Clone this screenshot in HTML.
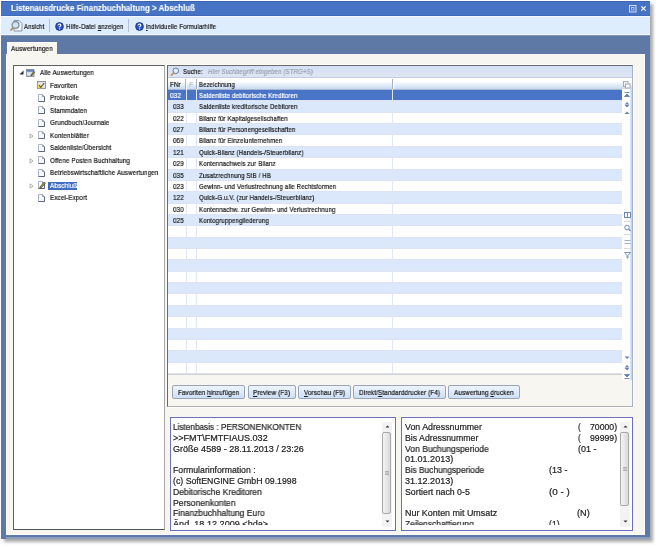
<!DOCTYPE html>
<html><head><meta charset="utf-8">
<style>
*{margin:0;padding:0;box-sizing:border-box}
html,body{width:659px;height:548px;overflow:hidden;background:#fff}
body{position:relative;font-family:"Liberation Sans",sans-serif;color:#1a1a1a}
.a{position:absolute}
svg{position:absolute;overflow:visible}
.t{position:absolute;line-height:1;white-space:pre;transform-origin:0 0;will-change:transform;-webkit-text-stroke:0.22px currentColor}
#shadow{left:1px;top:1px;width:649px;height:538px;background:transparent;box-shadow:3px 3px 3px 0px rgba(0,0,0,0.34)}
#win{left:1px;top:1px;width:649px;height:538px;background:#5f79a6}
#title{left:1px;top:1px;width:649px;height:15px;background:#4673c4;border-top:1px solid #3d64b2;border-bottom:1px solid #4068b8}
#toolbar{left:1px;top:16px;width:649px;height:19px;background:#deedfd;border-top:1px solid #f4f9ff;border-bottom:1px solid #f0f6fe}
#tbline{left:1px;top:35px;width:649px;height:1px;background:#7f93b8}
#panel{left:6px;top:54px;width:639px;height:481px;background:#f7f6f1;border-left:1px solid #fdfdfb;border-right:1px solid #fdfdfb;border-bottom:1px solid #fdfdfb}
#tab{left:7px;top:42px;width:50px;height:12px;background:#f7f6f1;border-top:1px solid #fbfbf8;border-left:1px solid #fdfdfb}
.box{background:#fff;border:1px solid #5a5a5a}
#tree{left:13px;top:65px;width:152px;height:465px;border-color:#606060 #a8a8a8 #505050 #606060}
#grid{left:167px;top:65px;width:466px;height:342px;background:#f7f6f1;border-color:#6a6a6a #a4b0c4 #b0b0b0 #6a6a6a;box-shadow:1px 1px 0 #fff,0 -1px 0 #fff}
#search{left:168px;top:66px;width:464px;height:11.5px;background:linear-gradient(#d3e1f6,#e0e4f3);border-bottom:1px solid #c3cfe0}
#hdr{left:168px;top:77.5px;width:464px;height:12.5px;background:linear-gradient(#fff 30%,#c7daf2);border-bottom:1px solid #a9b7cc}
.row{position:absolute;left:168px;width:453.5px;height:11.36px;border-bottom:1px solid #dde3f2}
.odd{background:#dbe8fb}
.even{background:#fff}
.sel{background:#4a74c8}
.vline{position:absolute;width:1px;background:#dfe7f6}
#nav{left:622px;top:89px;width:10px;height:290.5px;background:#fff;border-right:1px solid #c8d6ee;box-shadow:inset -1px 0 0 #d8e6fa}
.btn{position:absolute;top:385px;height:14px;border:1px solid #98a5b8;border-radius:2px;background:linear-gradient(#eef4fd,#cfdff5)}
.info{background:#fff;border:1px solid #6e6ec0}
.sbar{position:absolute;width:10px;background:#f3f3f3}
.thumb{position:absolute;left:0.5px;width:9px;border:1px solid #a9a9a9;border-radius:2px;background:linear-gradient(90deg,#f4f4f4,#d9d9d9)}
.tsel{background:#3e6cc0}
u{text-decoration:underline;text-underline-offset:0.8px;text-decoration-thickness:0.7px}
</style></head><body>
<div id="shadow" class="a"></div>
<div id="win" class="a"></div>
<div class="a" style="left:6px;top:537px;width:644px;height:2px;background:#8a9cc0"></div>
<div id="title" class="a"></div>
<div class="t " style="left:11.00px;top:4.00px;font-size:8.5px;transform:scaleX(0.9391);font-weight:bold;color:#fff;-webkit-text-stroke:0.1px #fff">Listenausdrucke Finanzbuchhaltung &gt; Abschluß</div>
<svg style="left:628px;top:4px" width="9" height="9" viewBox="0 0 9 9"><rect x="1.5" y="1.5" width="6.5" height="6.5" fill="none" stroke="#d0dcf4" stroke-width="1"/><rect x="3.5" y="3.5" width="2.5" height="2.5" fill="none" stroke="#c4d2f0" stroke-width="0.8"/></svg>
<svg style="left:640px;top:5px" width="7" height="7" viewBox="0 0 7 7"><path d="M1.3 1.3L5.7 5.7M5.7 1.3L1.3 5.7" stroke="#fff" stroke-width="1.2"/></svg>
<div id="toolbar" class="a"></div>
<div id="tbline" class="a"></div>
<div id="panel" class="a"></div>
<div id="tab" class="a"></div>
<div class="t " style="left:11.20px;top:45.00px;font-size:7.5px;transform:scaleX(0.8405);letter-spacing:0.15px">Auswertungen</div>
<svg style="left:9px;top:19px" width="14" height="13" viewBox="0 0 14 13"><path d="M5 1.5h5l3 3v7.5h-8z" fill="#f2f4f8" stroke="#8a93a8" stroke-width="1"/><circle cx="6.5" cy="6" r="3.4" fill="#cfe6f2" stroke="#7b8aa0" stroke-width="1.2"/><path d="M4.3 8.5L1.5 11.5" stroke="#b8875a" stroke-width="1.8"/></svg>
<div class="t " style="left:24.00px;top:23.00px;font-size:7.5px;transform:scaleX(0.7925);letter-spacing:0.15px">Ansicht</div>
<div class="a" style="left:49px;top:19px;width:1px;height:13px;background:#b4c0d0"></div>
<svg style="left:54.5px;top:21.5px" width="9" height="9" viewBox="0 0 9 9"><circle cx="4.5" cy="4.5" r="3.9" fill="#2b52c2" stroke="#1a2f70" stroke-width="0.8"/><path d="M3.1 3.4Q3.2 2 4.5 2Q5.9 2 5.9 3.3Q5.9 4.1 4.6 4.8V5.6" fill="none" stroke="#fff" stroke-width="1.1"/><rect x="4" y="6.3" width="1.2" height="1.1" fill="#fff"/></svg>
<div class="t " style="left:65.50px;top:23.00px;font-size:7.5px;transform:scaleX(0.8151);letter-spacing:0.15px">Hilfe-Datei <u>a</u>nzeigen</div>
<div class="a" style="left:128px;top:19px;width:1px;height:13px;background:#b4c0d0"></div>
<svg style="left:134.5px;top:21.5px" width="9" height="9" viewBox="0 0 9 9"><circle cx="4.5" cy="4.5" r="3.9" fill="#2b52c2" stroke="#1a2f70" stroke-width="0.8"/><path d="M3.1 3.4Q3.2 2 4.5 2Q5.9 2 5.9 3.3Q5.9 4.1 4.6 4.8V5.6" fill="none" stroke="#fff" stroke-width="1.1"/><rect x="4" y="6.3" width="1.2" height="1.1" fill="#fff"/></svg>
<div class="t " style="left:145.50px;top:23.00px;font-size:7.5px;transform:scaleX(0.8081);letter-spacing:0.15px"><u>i</u>ndividuelle Formularhilfe</div>
<div id="tree" class="a box"></div>
<svg style="left:19px;top:69.5px" width="5" height="5" viewBox="0 0 5 5"><path d="M4.5 0.5V4.5H0.5z" fill="#262626"/></svg>
<svg style="left:26px;top:69.0px" width="10" height="8" viewBox="0 0 10 8"><defs><linearGradient id="rg" x1="0" y1="0" x2="0" y2="1"><stop offset="0" stop-color="#5a72b4"/><stop offset="0.3" stop-color="#7f94c4"/><stop offset="0.4" stop-color="#d4dcea"/><stop offset="1" stop-color="#eef0f4"/></linearGradient></defs><rect x="0.5" y="0.5" width="7.5" height="6.8" fill="url(#rg)" stroke="#7a84a0" stroke-width="0.8"/><path d="M0.5 7.2H8" stroke="#8a90a0" stroke-width="1"/><path d="M5 6.8L8.4 2.6" stroke="#46501e" stroke-width="1.8"/><path d="M5.4 6.2L8.1 3" stroke="#a8b838" stroke-width="0.7"/></svg>
<div class="t " style="left:39.60px;top:69.00px;font-size:7.5px;transform:scaleX(0.8352);letter-spacing:0.15px">Alle Auswertungen</div>
<svg style="left:37px;top:81.1px" width="9" height="8" viewBox="0 0 9 8"><rect x="0.5" y="0.5" width="8" height="7" fill="#e4e2ec" stroke="#8c8c94" stroke-width="0.9"/><path d="M0.8 7.2V2.2L5.5 7.2z" fill="#e8d84e"/><path d="M2.2 4.2L3.8 6.4L7.2 2" fill="none" stroke="#5a5a28" stroke-width="1.1"/></svg>
<div class="t " style="left:49.60px;top:81.50px;font-size:7.5px;transform:scaleX(0.8372);letter-spacing:0.15px">Favoriten</div>
<svg style="left:38px;top:93.9px" width="7" height="8" viewBox="0 0 7 8"><path d="M0.5 7.5V0.5H4.3L6.5 2.7V7.5z" fill="#f7f8fc" stroke="#a4acc0" stroke-width="0.9"/><path d="M6.5 2.7V7.5H0.5" fill="none" stroke="#5c6680" stroke-width="1"/><path d="M4.2 0.4V2.8H6.6z" fill="#7a849c"/></svg>
<div class="t " style="left:49.60px;top:94.00px;font-size:7.5px;transform:scaleX(0.8356);letter-spacing:0.15px">Protokolle</div>
<svg style="left:38px;top:106.4px" width="7" height="8" viewBox="0 0 7 8"><path d="M0.5 7.5V0.5H4.3L6.5 2.7V7.5z" fill="#f7f8fc" stroke="#a4acc0" stroke-width="0.9"/><path d="M6.5 2.7V7.5H0.5" fill="none" stroke="#5c6680" stroke-width="1"/><path d="M4.2 0.4V2.8H6.6z" fill="#7a849c"/></svg>
<div class="t " style="left:49.60px;top:106.50px;font-size:7.5px;transform:scaleX(0.8435);letter-spacing:0.15px">Stammdaten</div>
<svg style="left:38px;top:118.9px" width="7" height="8" viewBox="0 0 7 8"><path d="M0.5 7.5V0.5H4.3L6.5 2.7V7.5z" fill="#f7f8fc" stroke="#a4acc0" stroke-width="0.9"/><path d="M6.5 2.7V7.5H0.5" fill="none" stroke="#5c6680" stroke-width="1"/><path d="M4.2 0.4V2.8H6.6z" fill="#7a849c"/></svg>
<div class="t " style="left:49.60px;top:119.00px;font-size:7.5px;transform:scaleX(0.8400);letter-spacing:0.15px">Grundbuch/Journale</div>
<svg style="left:29px;top:132.5px" width="5" height="6" viewBox="0 0 5 6"><path d="M1 0.8L4 3L1 5.2z" fill="#fff" stroke="#9a9a9a" stroke-width="0.8"/></svg>
<svg style="left:38px;top:131.4px" width="7" height="8" viewBox="0 0 7 8"><path d="M0.5 7.5V0.5H4.3L6.5 2.7V7.5z" fill="#f7f8fc" stroke="#a4acc0" stroke-width="0.9"/><path d="M6.5 2.7V7.5H0.5" fill="none" stroke="#5c6680" stroke-width="1"/><path d="M4.2 0.4V2.8H6.6z" fill="#7a849c"/></svg>
<div class="t " style="left:49.60px;top:131.50px;font-size:7.5px;transform:scaleX(0.8368);letter-spacing:0.15px">Kontenblätter</div>
<svg style="left:38px;top:143.9px" width="7" height="8" viewBox="0 0 7 8"><path d="M0.5 7.5V0.5H4.3L6.5 2.7V7.5z" fill="#f7f8fc" stroke="#a4acc0" stroke-width="0.9"/><path d="M6.5 2.7V7.5H0.5" fill="none" stroke="#5c6680" stroke-width="1"/><path d="M4.2 0.4V2.8H6.6z" fill="#7a849c"/></svg>
<div class="t " style="left:49.60px;top:144.00px;font-size:7.5px;transform:scaleX(0.8360);letter-spacing:0.15px">Saldenliste/Übersicht</div>
<svg style="left:29px;top:157.5px" width="5" height="6" viewBox="0 0 5 6"><path d="M1 0.8L4 3L1 5.2z" fill="#fff" stroke="#9a9a9a" stroke-width="0.8"/></svg>
<svg style="left:38px;top:156.4px" width="7" height="8" viewBox="0 0 7 8"><path d="M0.5 7.5V0.5H4.3L6.5 2.7V7.5z" fill="#f7f8fc" stroke="#a4acc0" stroke-width="0.9"/><path d="M6.5 2.7V7.5H0.5" fill="none" stroke="#5c6680" stroke-width="1"/><path d="M4.2 0.4V2.8H6.6z" fill="#7a849c"/></svg>
<div class="t " style="left:49.60px;top:156.50px;font-size:7.5px;transform:scaleX(0.8390);letter-spacing:0.15px">Offene Posten Buchhaltung</div>
<svg style="left:38px;top:168.9px" width="7" height="8" viewBox="0 0 7 8"><path d="M0.5 7.5V0.5H4.3L6.5 2.7V7.5z" fill="#f7f8fc" stroke="#a4acc0" stroke-width="0.9"/><path d="M6.5 2.7V7.5H0.5" fill="none" stroke="#5c6680" stroke-width="1"/><path d="M4.2 0.4V2.8H6.6z" fill="#7a849c"/></svg>
<div class="t " style="left:49.60px;top:169.00px;font-size:7.5px;transform:scaleX(0.8369);letter-spacing:0.15px">Betriebswirtschaftliche Auswertungen</div>
<svg style="left:29px;top:182.5px" width="5" height="6" viewBox="0 0 5 6"><path d="M1 0.8L4 3L1 5.2z" fill="#fff" stroke="#9a9a9a" stroke-width="0.8"/></svg>
<svg style="left:38px;top:181.4px" width="7" height="8" viewBox="0 0 7 8"><path d="M0.5 7.5V0.5H4.3L6.5 2.7V7.5z" fill="#f7f8fc" stroke="#a4acc0" stroke-width="0.9"/><path d="M6.5 2.7V7.5H0.5" fill="none" stroke="#5c6680" stroke-width="1"/><path d="M4.2 0.4V2.8H6.6z" fill="#7a849c"/></svg>
<svg style="left:38px;top:181.0px" width="8" height="8" viewBox="0 0 8 8"><path d="M2 7L7 1.5" stroke="#3a3a20" stroke-width="2"/><path d="M2.3 6.5L6.7 1.8" stroke="#e8d040" stroke-width="1"/></svg>
<div class="a tsel" style="left:48px;top:181.50px;width:29px;height:8.6px"></div>
<div class="t " style="left:49.60px;top:181.50px;font-size:7.5px;transform:scaleX(0.8411);letter-spacing:0.15px;color:#fff">Abschluß</div>
<svg style="left:38px;top:193.9px" width="7" height="8" viewBox="0 0 7 8"><path d="M0.5 7.5V0.5H4.3L6.5 2.7V7.5z" fill="#f7f8fc" stroke="#a4acc0" stroke-width="0.9"/><path d="M6.5 2.7V7.5H0.5" fill="none" stroke="#5c6680" stroke-width="1"/><path d="M4.2 0.4V2.8H6.6z" fill="#7a849c"/></svg>
<div class="t " style="left:49.60px;top:194.00px;font-size:7.5px;transform:scaleX(0.8379);letter-spacing:0.15px">Excel-Export</div>
<div id="grid" class="a box"></div>
<div id="search" class="a"></div>
<div id="hdr" class="a"></div>
<svg style="left:170px;top:67px" width="10" height="9" viewBox="0 0 10 9"><circle cx="5.8" cy="3.8" r="2.8" fill="#d8eef8" stroke="#6d7b90" stroke-width="1"/><path d="M3.8 5.8L1 8.5" stroke="#c08a50" stroke-width="1.6"/></svg>
<div class="t " style="left:183.20px;top:68.00px;font-size:7.5px;transform:scaleX(0.8121);letter-spacing:0.15px">Suche:</div>
<div class="t " style="left:208.00px;top:68.00px;font-size:7.5px;transform:scaleX(0.8132);letter-spacing:0.15px;font-style:italic;color:#9aa3b0">Hier Suchbegriff eingeben (STRG+S)</div>
<div class="t " style="left:170.00px;top:80.50px;font-size:7.5px;transform:scaleX(0.8304);letter-spacing:0.15px">FNr</div>
<div class="a" style="left:185px;top:79px;width:1px;height:10px;background:#a8b0bc;border-right:1px solid #fff;box-sizing:content-box"></div>
<div class="t " style="left:188.70px;top:80.50px;font-size:7.5px;transform:scaleX(0.8307);letter-spacing:0.15px;font-style:italic;color:#b8bcc4">F</div>
<div class="a" style="left:195.5px;top:79px;width:1px;height:10px;background:#a8b0bc;border-right:1px solid #fff;box-sizing:content-box"></div>
<div class="a" style="left:392px;top:79px;width:1px;height:10px;background:#a8b0bc;border-right:1px solid #fff;box-sizing:content-box"></div>
<div class="t " style="left:199.00px;top:80.50px;font-size:7.5px;transform:scaleX(0.7963);letter-spacing:0.15px">Bezeichnung</div>
<svg style="left:622.5px;top:80.5px" width="8" height="8" viewBox="0 0 8 8"><rect x="0.5" y="0.5" width="4.5" height="5" fill="#f4f4f4" stroke="#a4a4a4" stroke-width="0.9"/><rect x="2.5" y="3" width="4.5" height="4" fill="#fafafa" stroke="#a4a4a4" stroke-width="0.9"/></svg>
<div class="row sel" style="top:90.00px"></div>
<div class="row odd" style="top:101.36px"></div>
<div class="row even" style="top:112.72px"></div>
<div class="row odd" style="top:124.08px"></div>
<div class="row even" style="top:135.44px"></div>
<div class="row odd" style="top:146.80px"></div>
<div class="row even" style="top:158.16px"></div>
<div class="row odd" style="top:169.52px"></div>
<div class="row even" style="top:180.88px"></div>
<div class="row odd" style="top:192.24px"></div>
<div class="row even" style="top:203.60px"></div>
<div class="row odd" style="top:214.96px"></div>
<div class="row even" style="top:226.32px"></div>
<div class="row odd" style="top:237.68px"></div>
<div class="row even" style="top:249.04px"></div>
<div class="row odd" style="top:260.40px"></div>
<div class="row even" style="top:271.76px"></div>
<div class="row odd" style="top:283.12px"></div>
<div class="row even" style="top:294.48px"></div>
<div class="row odd" style="top:305.84px"></div>
<div class="row even" style="top:317.20px"></div>
<div class="row odd" style="top:328.56px"></div>
<div class="row even" style="top:339.92px"></div>
<div class="row odd" style="top:351.28px"></div>
<div class="row even" style="top:362.64px"></div>
<div class="vline" style="left:186px;top:89px;height:284.0px"></div>
<div class="vline" style="left:196px;top:89px;height:284.0px"></div>
<div class="vline" style="left:392px;top:89px;height:284.0px"></div>
<div class="t " style="left:170.10px;top:92.00px;font-size:7.5px;transform:scaleX(0.8495);letter-spacing:0.15px;color:#fff">032</div>
<div class="t " style="left:199.00px;top:92.00px;font-size:7.5px;transform:scaleX(0.8138);letter-spacing:0.15px;color:#fff">Saldenliste debitorische Kreditoren</div>
<div class="t " style="left:173.10px;top:103.36px;font-size:7.5px;transform:scaleX(0.8327);letter-spacing:0.15px">033</div>
<div class="t " style="left:199.00px;top:103.36px;font-size:7.5px;transform:scaleX(0.8138);letter-spacing:0.15px">Saldenliste kreditorische Debitoren</div>
<div class="t " style="left:173.10px;top:114.72px;font-size:7.5px;transform:scaleX(0.8327);letter-spacing:0.15px">022</div>
<div class="t " style="left:199.00px;top:114.72px;font-size:7.5px;transform:scaleX(0.8132);letter-spacing:0.15px">Bilanz für Kapitalgesellschaften</div>
<div class="t " style="left:173.10px;top:126.08px;font-size:7.5px;transform:scaleX(0.8327);letter-spacing:0.15px">027</div>
<div class="t " style="left:199.00px;top:126.08px;font-size:7.5px;transform:scaleX(0.8151);letter-spacing:0.15px">Bilanz für Personengesellschaften</div>
<div class="t " style="left:173.10px;top:137.44px;font-size:7.5px;transform:scaleX(0.8327);letter-spacing:0.15px">069</div>
<div class="t " style="left:199.00px;top:137.44px;font-size:7.5px;transform:scaleX(0.8157);letter-spacing:0.15px">Bilanz für Einzelunternehmen</div>
<div class="t " style="left:173.10px;top:148.80px;font-size:7.5px;transform:scaleX(0.8327);letter-spacing:0.15px">121</div>
<div class="t " style="left:199.00px;top:148.80px;font-size:7.5px;transform:scaleX(0.8149);letter-spacing:0.15px">Quick-Bilanz (Handels-/Steuerbilanz)</div>
<div class="t " style="left:173.10px;top:160.16px;font-size:7.5px;transform:scaleX(0.8327);letter-spacing:0.15px">029</div>
<div class="t " style="left:199.00px;top:160.16px;font-size:7.5px;transform:scaleX(0.8166);letter-spacing:0.15px">Kontennachweis zur Bilanz</div>
<div class="t " style="left:173.10px;top:171.52px;font-size:7.5px;transform:scaleX(0.8327);letter-spacing:0.15px">035</div>
<div class="t " style="left:199.00px;top:171.52px;font-size:7.5px;transform:scaleX(0.8174);letter-spacing:0.15px">Zusatzrechnung StB / HB</div>
<div class="t " style="left:173.10px;top:182.88px;font-size:7.5px;transform:scaleX(0.8327);letter-spacing:0.15px">023</div>
<div class="t " style="left:199.00px;top:182.88px;font-size:7.5px;transform:scaleX(0.8165);letter-spacing:0.15px">Gewinn- und Verlustrechnung alle Rechtsformen</div>
<div class="t " style="left:173.10px;top:194.24px;font-size:7.5px;transform:scaleX(0.8327);letter-spacing:0.15px">122</div>
<div class="t " style="left:199.00px;top:194.24px;font-size:7.5px;transform:scaleX(0.8146);letter-spacing:0.15px">Quick-G.u.V. (zur Handels-/Steuerbilanz)</div>
<div class="t " style="left:173.10px;top:205.60px;font-size:7.5px;transform:scaleX(0.8327);letter-spacing:0.15px">030</div>
<div class="t " style="left:199.00px;top:205.60px;font-size:7.5px;transform:scaleX(0.8170);letter-spacing:0.15px">Kontennachw. zur Gewinn- und Verlustrechnung</div>
<div class="t " style="left:173.10px;top:216.96px;font-size:7.5px;transform:scaleX(0.8327);letter-spacing:0.15px">025</div>
<div class="t " style="left:199.00px;top:216.96px;font-size:7.5px;transform:scaleX(0.8179);letter-spacing:0.15px">Kontogruppengliederung</div>
<div class="a" style="left:168px;top:374.00px;width:454px;height:1px;background:#d0d0d0"></div>
<div id="nav" class="a"></div>
<svg style="left:624px;top:92px" width="6" height="6" viewBox="0 0 6 6"><path d="M0.5 0.5H5.5M0.5 4.5L3 2L5.5 4.5z" fill="#6680b4" stroke="#6680b4" stroke-width="0.9"/></svg>
<svg style="left:624px;top:101.5px" width="6" height="6" viewBox="0 0 6 6"><path d="M0.6 2.5L3 0.1L5.4 2.5zM0.6 3.1L3 5.5L5.4 3.1z" fill="#6680b4" stroke="#6680b4" stroke-width="0"/></svg>
<svg style="left:624px;top:110.8px" width="6" height="6" viewBox="0 0 6 6"><path d="M0.5 3L3 0.5L5.5 3z" fill="#6680b4" stroke="#6680b4" stroke-width="0"/></svg>
<svg style="left:624px;top:356px" width="6" height="6" viewBox="0 0 6 6"><path d="M0.5 0.5L3 3L5.5 0.5z" fill="#6680b4" stroke="#6680b4" stroke-width="0"/></svg>
<svg style="left:624px;top:365px" width="6" height="6" viewBox="0 0 6 6"><path d="M0.6 2.5L3 0.1L5.4 2.5zM0.6 3.1L3 5.5L5.4 3.1z" fill="#6680b4" stroke="#6680b4" stroke-width="0"/></svg>
<svg style="left:624px;top:373.5px" width="6" height="6" viewBox="0 0 6 6"><path d="M0.5 0.5L3 3L5.5 0.5zM0.5 4.5H5.5" fill="#6680b4" stroke="#6680b4" stroke-width="0.9"/></svg>
<svg style="left:623.5px;top:212px" width="8" height="48" viewBox="0 0 8 48"><rect x="0.5" y="0.5" width="6" height="5" fill="none" stroke="#7088b8"/><path d="M3.5 0.5V5.5" stroke="#7088b8"/><path d="M0 9.5H7M0 22.5H7M0 36.5H7" stroke="#d6dbe8"/><circle cx="3" cy="15.5" r="2.3" fill="none" stroke="#7088b8"/><path d="M4.6 17.2L6.5 19" stroke="#7088b8" stroke-width="1.2"/><path d="M0.5 28.5H6.5M0.5 31.5H6.5" stroke="#8898c0" stroke-width="0.8"/><path d="M0.5 40.5H6.5L4 43.5V46H3V43.5z" fill="none" stroke="#7088b8" stroke-width="0.9"/></svg>
<div class="btn" style="left:171.8px;width:73px"></div>
<div class="t " style="left:177.71px;top:388.50px;font-size:7.5px;transform:scaleX(0.8376);letter-spacing:0.15px">Favoriten <u>h</u>inzufügen</div>
<div class="btn" style="left:247.5px;width:48.3px"></div>
<div class="t " style="left:253.08px;top:388.50px;font-size:7.5px;transform:scaleX(0.8379);letter-spacing:0.15px"><u>P</u>review (F3)</div>
<div class="btn" style="left:298px;width:53px"></div>
<div class="t " style="left:303.93px;top:388.50px;font-size:7.5px;transform:scaleX(0.8386);letter-spacing:0.15px"><u>V</u>orschau (F9)</div>
<div class="btn" style="left:353.1px;width:92.8px"></div>
<div class="t " style="left:358.91px;top:388.50px;font-size:7.5px;transform:scaleX(0.8369);letter-spacing:0.15px">Direkt/<u>S</u>tandarddrucker (F4)</div>
<div class="btn" style="left:448px;width:71.5px"></div>
<div class="t " style="left:453.89px;top:388.50px;font-size:7.5px;transform:scaleX(0.8402);letter-spacing:0.15px">Auswertung <u>d</u>rucken</div>
<div id="info1" class="a info" style="left:169.5px;top:417px;width:226px;height:113.5px"></div>
<div id="info2" class="a info" style="left:401px;top:417px;width:231.5px;height:113.5px"></div>
<div class="a" style="left:170.5px;top:418px;width:211px;height:107px;overflow:hidden">
<div class="t " style="left:2.50px;top:5.00px;font-size:8.7px;transform:scaleX(0.9449);color:#222;-webkit-text-stroke:0.2px currentColor">Listenbasis : PERSONENKONTEN</div>
<div class="t " style="left:2.50px;top:15.80px;font-size:8.7px;transform:scaleX(1.0433);color:#222;-webkit-text-stroke:0.2px currentColor">&gt;&gt;FMT\FMTFIAUS.032</div>
<div class="t " style="left:2.50px;top:26.60px;font-size:8.7px;transform:scaleX(1.0397);color:#222;-webkit-text-stroke:0.2px currentColor">Größe 4589 - 28.11.2013 / 23:26</div>
<div class="t " style="left:2.50px;top:48.20px;font-size:8.7px;transform:scaleX(1.0005);color:#222;-webkit-text-stroke:0.2px currentColor">Formularinformation :</div>
<div class="t " style="left:2.50px;top:59.00px;font-size:8.7px;transform:scaleX(1.0078);color:#222;-webkit-text-stroke:0.2px currentColor">(c) SoftENGINE GmbH 09.1998</div>
<div class="t " style="left:2.50px;top:69.80px;font-size:8.7px;transform:scaleX(0.9780);color:#222;-webkit-text-stroke:0.2px currentColor">Debitorische Kreditoren</div>
<div class="t " style="left:2.50px;top:80.60px;font-size:8.7px;transform:scaleX(0.9892);color:#222;-webkit-text-stroke:0.2px currentColor">Personenkonten</div>
<div class="t " style="left:2.50px;top:91.40px;font-size:8.7px;transform:scaleX(0.9736);color:#222;-webkit-text-stroke:0.2px currentColor">Finanzbuchhaltung Euro</div>
<div class="t " style="left:2.50px;top:102.20px;font-size:8.7px;transform:scaleX(1.0481);color:#222;-webkit-text-stroke:0.2px currentColor">Änd. 18.12.2009 &lt;hda&gt;</div>
</div>
<div class="a" style="left:402px;top:418px;width:218px;height:107px;overflow:hidden">
<div class="t " style="left:2.60px;top:5.00px;font-size:8.7px;transform:scaleX(1.0143);color:#222;-webkit-text-stroke:0.2px currentColor">Von Adressnummer</div>
<div class="t " style="left:2.60px;top:15.80px;font-size:8.7px;transform:scaleX(1.0054);color:#222;-webkit-text-stroke:0.2px currentColor">Bis Adressnummer</div>
<div class="t " style="left:2.60px;top:26.60px;font-size:8.7px;transform:scaleX(0.9845);color:#222;-webkit-text-stroke:0.2px currentColor">Von Buchungsperiode</div>
<div class="t " style="left:2.60px;top:37.40px;font-size:8.7px;transform:scaleX(1.0394);color:#222;-webkit-text-stroke:0.2px currentColor">01.01.2013)</div>
<div class="t " style="left:2.60px;top:48.20px;font-size:8.7px;transform:scaleX(0.9646);color:#222;-webkit-text-stroke:0.2px currentColor">Bis Buchungsperiode</div>
<div class="t " style="left:2.60px;top:59.00px;font-size:8.7px;transform:scaleX(1.0394);color:#222;-webkit-text-stroke:0.2px currentColor">31.12.2013)</div>
<div class="t " style="left:2.60px;top:69.80px;font-size:8.7px;transform:scaleX(1.0088);color:#222;-webkit-text-stroke:0.2px currentColor">Sortiert nach 0-5</div>
<div class="t " style="left:2.60px;top:91.40px;font-size:8.7px;transform:scaleX(1.0255);color:#222;-webkit-text-stroke:0.2px currentColor">Nur Konten mit Umsatz</div>
<div class="t " style="left:2.60px;top:102.20px;font-size:8.7px;transform:scaleX(0.9676);color:#222;-webkit-text-stroke:0.2px currentColor">Zeilenschattierung</div>
<div class="t " style="left:175.60px;top:5.00px;font-size:8.7px;transform:scaleX(0.9000);color:#222;-webkit-text-stroke:0.2px currentColor">(</div>
<div class="t " style="left:188.10px;top:5.00px;font-size:8.7px;transform:scaleX(0.9977);color:#222;-webkit-text-stroke:0.2px currentColor">70000)</div>
<div class="t " style="left:175.60px;top:15.80px;font-size:8.7px;transform:scaleX(0.9000);color:#222;-webkit-text-stroke:0.2px currentColor">(</div>
<div class="t " style="left:188.10px;top:15.80px;font-size:8.7px;transform:scaleX(0.9977);color:#222;-webkit-text-stroke:0.2px currentColor">99999)</div>
<div class="t " style="left:175.60px;top:26.60px;font-size:8.7px;transform:scaleX(1.0294);color:#222;-webkit-text-stroke:0.2px currentColor">(01 -</div>
<div class="t " style="left:146.50px;top:48.20px;font-size:8.7px;transform:scaleX(1.0350);color:#222;-webkit-text-stroke:0.2px currentColor">(13 -</div>
<div class="t " style="left:146.50px;top:69.80px;font-size:8.7px;transform:scaleX(1.1339);color:#222;-webkit-text-stroke:0.2px currentColor">(0 - )</div>
<div class="t " style="left:175.30px;top:91.40px;font-size:8.7px;transform:scaleX(1.0528);color:#222;-webkit-text-stroke:0.2px currentColor">(N)</div>
<div class="t " style="left:146.50px;top:102.20px;font-size:8.7px;transform:scaleX(0.9882);color:#222;-webkit-text-stroke:0.2px currentColor">(1)</div>
</div>
<div class="sbar" style="left:382px;top:421.5px;height:105px"></div><svg style="left:385px;top:425px" width="5" height="3" viewBox="0 0 5 3"><path d="M0.5 2.5L2.5 0.5L4.5 2.5z" fill="#333"/></svg><div class="thumb" style="left:382px;top:431.5px;height:82px"></div><svg style="left:385px;top:471px" width="4" height="4" viewBox="0 0 4 4"><path d="M0 0.5H4M0 2H4M0 3.5H4" stroke="#888" stroke-width="0.6"/></svg><svg style="left:385px;top:520px" width="5" height="3" viewBox="0 0 5 3"><path d="M0.5 0.5L2.5 2.5L4.5 0.5z" fill="#333"/></svg>
<div class="sbar" style="left:620px;top:421.5px;height:105px"></div><svg style="left:623px;top:425px" width="5" height="3" viewBox="0 0 5 3"><path d="M0.5 2.5L2.5 0.5L4.5 2.5z" fill="#333"/></svg><div class="thumb" style="left:620px;top:431.5px;height:74.5px"></div><svg style="left:623px;top:466.6px" width="4" height="4" viewBox="0 0 4 4"><path d="M0 0.5H4M0 2H4M0 3.5H4" stroke="#888" stroke-width="0.6"/></svg><svg style="left:623px;top:520px" width="5" height="3" viewBox="0 0 5 3"><path d="M0.5 0.5L2.5 2.5L4.5 0.5z" fill="#333"/></svg>
</body></html>
